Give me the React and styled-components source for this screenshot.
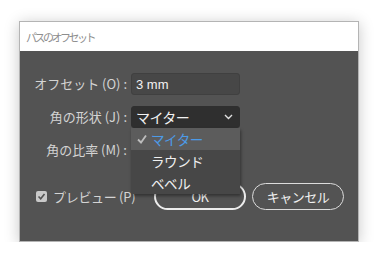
import React from "react";
import styled, { createGlobalStyle } from "styled-components";

const Global = createGlobalStyle`
  html, body { margin: 0; padding: 0; background: #ffffff; }
  body { font-family: "Noto Sans CJK JP", "Noto Sans", sans-serif; }
`;

const Page = styled.div`
  padding: 21px 0 0 19px;
`;

const Window = styled.div`
  position: relative;
  width: 340px;
  height: 221px;
  box-sizing: border-box;
  border: 1px solid #b4b4b4;
  box-shadow: 0 2px 14px rgba(0, 0, 0, 0.22);
  display: flex;
  flex-direction: column;
  background: #535353;
`;

const TitleBar = styled.div`
  height: 29px;
  background: #ffffff;
  display: flex;
  align-items: center;
  padding-left: 6px;
  font-size: 11px;
  letter-spacing: -2.5px;
  color: #8e8e8e;
  flex: none;
`;

const Body = styled.div`
  flex: 1;
  padding: 22px 0 0 0;
  display: flex;
  flex-direction: column;
  position: relative;
`;

const Form = styled.div`
  display: grid;
  grid-template-columns: 107px 109px;
  column-gap: 4px;
  row-gap: 11px;
  align-items: center;
`;

const Label = styled.div`
  text-align: right;
  font-size: 13px;
  color: #d4d4d4;
  letter-spacing: 0;
  white-space: nowrap;
  line-height: 22px;
`;

const Field = styled.div`
  height: 22px;
  box-sizing: border-box;
  border-radius: 3px;
  background: ${(p) => (p.$dark ? "#2f2f2f" : "#474747")};
  border: 1px solid ${(p) => (p.$dark ? "#2f2f2f" : "#404040")};
  color: #f2f2f2;
  font-family: ${(p) => (p.$latin ? '"Liberation Sans", sans-serif' : '"Noto Sans CJK JP", sans-serif')};
  font-size: ${(p) => (p.$latin ? "13px" : "14px")};
  display: flex;
  align-items: center;
  justify-content: space-between;
  padding: 0 6px 0 4px;
  letter-spacing: ${(p) => (p.$latin ? "0" : "-0.6px")};
`;

const Chevron = styled.svg`
  width: 9px;
  height: 6px;
`;

const Menu = styled.div`
  position: absolute;
  left: 111px;
  top: 77px;
  width: 109px;
  background: #474747;
  box-shadow: 1px 2px 3px rgba(0, 0, 0, 0.4);
  display: flex;
  flex-direction: column;
  z-index: 2;
`;

const MenuItem = styled.div`
  height: 22px;
  display: flex;
  align-items: center;
  padding-left: 6px;
  gap: 4px;
  background: ${(p) => (p.$active ? "#5c5c5c" : "transparent")};
  color: ${(p) => (p.$active ? "#4c9be8" : "#f0f0f0")};
  font-size: 13.5px;
  letter-spacing: -0.4px;
`;

const CheckMark = styled.svg`
  width: 10px;
  height: 10px;
  visibility: ${(p) => (p.$show ? "visible" : "hidden")};
`;

const Footer = styled.div`
  display: flex;
  align-items: center;
  margin-top: 22px;
  padding-left: 16px;
`;

const Preview = styled.label`
  display: flex;
  align-items: center;
  gap: 6px;
  font-size: 13px;
  color: #d4d4d4;
  letter-spacing: -0.3px;
  width: 118px;
`;

const Box = styled.span`
  width: 11px;
  height: 11px;
  border-radius: 2px;
  background: #c9c9c9;
  display: flex;
  align-items: center;
  justify-content: center;
`;

const Button = styled.button`
  height: 27px;
  width: ${(p) => (p.$w || 92)}px;
  box-sizing: border-box;
  border-radius: 14px;
  border: ${(p) => (p.$primary ? "2px solid #ececec" : "1.5px solid #dcdcdc")};
  background: transparent;
  color: #f0f0f0;
  font-family: "Noto Sans CJK JP", "Liberation Sans", sans-serif;
  font-size: 13px;
  letter-spacing: -0.5px;
  margin-right: 6px;
  padding: 0;
`;

export default function App() {
  return (
    <>
      <Global />
      <Page>
        <Window>
          <TitleBar>パスのオフセット</TitleBar>
          <Body>
            <Form>
              <Label>オフセット (O) :</Label>
              <Field $latin>3 mm</Field>
              <Label>角の形状 (J) :</Label>
              <Field $dark>
                <span>マイター</span>
                <Chevron viewBox="0 0 9 6">
                  <path d="M1 1 L4.5 4.5 L8 1" fill="none" stroke="#e0e0e0" strokeWidth="1.4" />
                </Chevron>
              </Field>
              <Label>角の比率 (M) :</Label>
              <Field $latin>4</Field>
            </Form>
            <Menu>
              <MenuItem $active>
                <CheckMark $show viewBox="0 0 10 10">
                  <path d="M1 5.5 L4 8.5 L9 1.5" fill="none" stroke="#bdbdbd" strokeWidth="1.8" />
                </CheckMark>
                マイター
              </MenuItem>
              <MenuItem>
                <CheckMark viewBox="0 0 10 10" />
                ラウンド
              </MenuItem>
              <MenuItem>
                <CheckMark viewBox="0 0 10 10" />
                ベベル
              </MenuItem>
            </Menu>
            <Footer>
              <Preview>
                <Box>
                  <svg width="9" height="9" viewBox="0 0 9 9">
                    <path d="M1.5 4.5 L3.7 6.8 L7.5 2" fill="none" stroke="#535353" strokeWidth="1.6" />
                  </svg>
                </Box>
                プレビュー (P)
              </Preview>
              <Button $primary $w={92}>OK</Button>
              <Button $w={92}>キャンセル</Button>
            </Footer>
          </Body>
        </Window>
      </Page>
    </>
  );
}
